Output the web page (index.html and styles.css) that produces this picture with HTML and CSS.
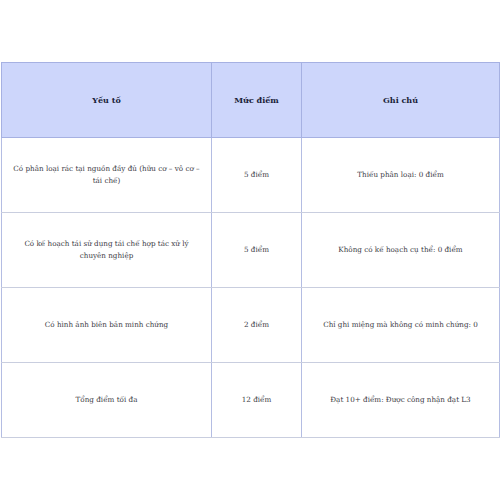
FILE: index.html
```html
<!DOCTYPE html>
<html lang="vi">
<head>
<meta charset="utf-8">
<link rel="stylesheet" href="styles.css">
</head>
<body>
<table class="score">
  <colgroup>
    <col class="c1">
    <col class="c2">
    <col class="c3">
  </colgroup>
  <thead>
    <tr>
      <th>Yếu tố</th>
      <th>Mức điểm</th>
      <th>Ghi chú</th>
    </tr>
  </thead>
  <tbody>
    <tr>
      <td>Có phân loại rác tại nguồn đầy đủ (hữu cơ – vô cơ – tái chế)</td>
      <td>5 điểm</td>
      <td>Thiếu phân loại: 0 điểm</td>
    </tr>
    <tr>
      <td>Có kế hoạch tái sử dụng tái chế hợp tác xử lý chuyên nghiệp</td>
      <td>5 điểm</td>
      <td>Không có kế hoạch cụ thể: 0 điểm</td>
    </tr>
    <tr>
      <td>Có hình ảnh biên bản minh chứng</td>
      <td>2 điểm</td>
      <td>Chỉ ghi miệng mà không có minh chứng: 0</td>
    </tr>
    <tr>
      <td>Tổng điểm tối đa</td>
      <td>12 điểm</td>
      <td>Đạt 10+ điểm: Được công nhận đạt L3</td>
    </tr>
  </tbody>
</table>
</body>
</html>
```

FILE: styles.css
```css
html, body {
  margin: 0;
  padding: 0;
  background: #ffffff;
}
body {
  padding: 62px 1px 0 1px;
  font-family: "DejaVu Serif", "Liberation Serif", serif;
}
.score {
  width: 498px;
  border-collapse: collapse;
  table-layout: fixed;
  font-size: 7.2px;
  line-height: 12px;
  color: #3a3a44;
}
.c1 { width: 210px; }
.c2 { width: 90px; }
.c3 { width: 198px; }
.score th, .score td {
  border: 1px solid #b4bde3;
  text-align: center;
  vertical-align: middle;
  padding: 0 10px;
  height: 74px;
}
.score th {
  background: #cdd6fb;
  color: #1b1f3a;
  font-weight: bold;
  font-size: 8px;
  border-color: #a6b1e2;
}
.score td {
  border-top-color: #c9cedf;
  border-bottom-color: #c9cedf;
}
```
